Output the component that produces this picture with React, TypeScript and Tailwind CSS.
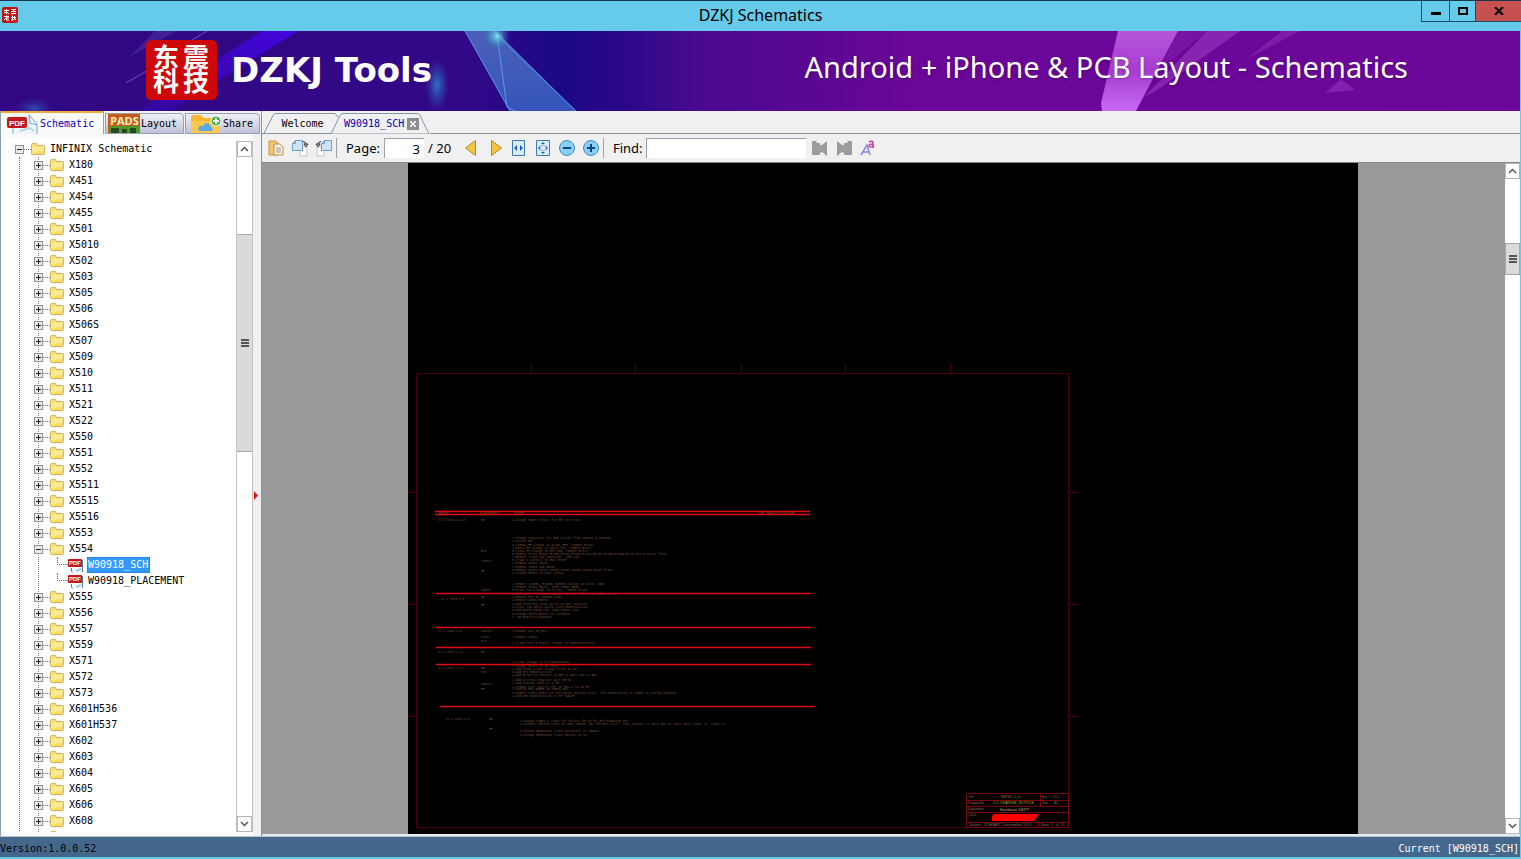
import type { ReactNode } from "react";

const foldersBefore = [
  "X180", "X451", "X454", "X455", "X501", "X5010", "X502", "X503", "X505", "X506", "X506S", "X507",
  "X509", "X510", "X511", "X521", "X522", "X550", "X551", "X552", "X5511", "X5515", "X5516", "X553",
];

const foldersAfter = [
  "X555", "X556", "X557", "X559", "X571", "X572", "X573", "X601H536", "X601H537", "X602", "X603",
  "X604", "X605", "X606", "X608",
];

const files = [
  { name: "W90918_SCH", selected: true },
  { name: "W90918_PLACEMENT", selected: false },
];

// notes on the sheet: [x, baseline, text]
const notes: [number, number, string][] = [
  [438, 521, "V1.1 2015.12.28"],
  [481, 521, "BB"],
  [512, 521, "1.Change Power Select for RF Interface"],
  [512, 539, "1.Change capacitor for bom bilink from U38510 (C200030)"],
  [512, 542, "2.Delete R9"],
  [512, 546, "3.U7801V_RF change to U7101_RF0, remove R7101"],
  [512, 549, "4.U5714 RF change to U9121_PA1, remove R7141"],
  [481, 552, "BTN"],
  [512, 552, "5.J1701 RF change to RF2 PA0, remove R7171"],
  [512, 555, "6.Remove R7101,R7102,R7103,R7104,R7105,R7106,R7107,R7108,R7109,R7110,R7111,R7112 lines"],
  [512, 558, "7.Remove J7101 and connector, add cap"],
  [481, 562, "Camera"],
  [512, 561, "8.J7101 V connect to GND_SENSE"],
  [512, 564, "1.Remove U8101 J8101"],
  [512, 568, "2.Remove J8104 and R8101"],
  [481, 572, "RF"],
  [512, 571, "3.Remove C8101,C8102,C8103,C8104,C8105,C8106,C8107 R 0xx"],
  [512, 574, "4.Change R8101 to 0402 sensor"],
  [512, 585, "1.Remove J10001, R10002,R10003 change as pilot lamp"],
  [512, 588, "2.Remove C8101,R8201, keep C8301,0R0B"],
  [481, 591, "Audio"],
  [512, 591, "3.R7101_PA1 change to PA_PA2, remove R7101"],
  [512, 595, "4.Add C7801 for R6101,R61010 for EMI filter of audio by 33PF"],
  [441, 600, "V1.1 2016.1.8"],
  [481, 598, "BB"],
  [512, 598, "1.Remove GPS as common U2404"],
  [512, 601, "2.Remove C8701,R8701"],
  [481, 606, "RF"],
  [512, 605, "3.Add reserved C1101 parts on EMI register"],
  [512, 608, "4.Color cap GF211 build clock modification"],
  [512, 611, "5.Add R8701,R8702 for TRUM,TRUM1 star"],
  [512, 615, "6.Change C8701,R8701 to rare0010"],
  [512, 618, "7. BB modification0101"],
  [438, 632, "V1.1 2016.1.9"],
  [481, 632, "Connect"],
  [512, 632, "1.Remove U01_C0_0011"],
  [481, 638, "Other"],
  [512, 638, "1.Remove J8101"],
  [481, 642, "BTN"],
  [512, 644, "1.C7101/7102 R signal change to GND01010101010"],
  [438, 653, "V1.1 2016.1.11"],
  [481, 653, "BB"],
  [512, 663, "1.C7101 change to 0.1PG0402C0101"],
  [438, 669, "V1.1 2016.1.12"],
  [481, 669, "BB"],
  [512, 667, "1.Change R7101 to be VIO28"],
  [512, 670, "2.Add R7101,C7101 change C7102 0.1uF"],
  [481, 673, "BTN"],
  [512, 673, "3.Add NFC modification"],
  [512, 676, "4.Add R7101 to connect SW_RF1 & AGC1,AGC to BB0"],
  [512, 681, "1.Add ATJ/MIC register part,0R R1"],
  [481, 685, "Camera"],
  [512, 684, "2.Add Vsensor both of C_CE"],
  [512, 688, "1.Change null search reg. of R01-1 to be RF"],
  [481, 690, "RF"],
  [512, 690, "2.Modify R01 00RNF to 01RNM_001"],
  [512, 694, "3.Remove C7011,R7011 to netlabing passive start, The counterplug is named as analog padding"],
  [512, 697, "4.Add 000 modification to BF TABLET"],
  [446, 720, "V1.1 2016.2.4"],
  [489, 720, "BB"],
  [520, 722, "1.Change PCB01-1 reset for before the pilot performanced 101"],
  [520, 725, "2.Connect TRC1M0 reset to TRD1 SENSE1,SE1 The RST alert. That connect to more 5MA an input more check is, input IL"],
  [489, 730, "RF"],
  [520, 732, "3.Change RDD010101 track connector to TRUM01"],
  [520, 736, "4.Change RDD010102 track EX1101 to 01"],
];

const rules = [
  [435, 511, 810],
  [435, 514, 810],
  [436, 593, 811],
  [436, 627, 811],
  [436, 647, 811],
  [436, 664, 811],
  [440, 706, 815],
];

const FolderIcon = () => (
  <svg width="14" height="14" viewBox="0 0 14 14" className="shrink-0" aria-hidden="true">
    <path d="M.5 2.500q0-1 1-1h4l1 2h6q1 0 1 1v7q0 1-1 1h-11q-1 0-1-1z" fill="#f8dc72" stroke="#d8b258" />
    <path d="M1 4.500h12v4.500q-6 0-12 2z" fill="#fff0a0" opacity=".75" />
  </svg>
);

const PdfIcon = () => (
  <svg width="32" height="20" viewBox="0 0 32 20" className="shrink-0" aria-hidden="true">
    <path d="M6 0h17l7 9v11H6z" fill="#eef6fb" />
    <path d="M22 1l8 9v10M22 1l1 8 7 2M6 14v6" fill="none" stroke="#71a9cc" />
    <path d="M13 17l10-3 4 3" fill="none" stroke="#b4d6e8" strokeWidth="2" />
    <rect x="0" y="3" width="20" height="11" rx="2" fill="#c4161c" />
    <text x="2" y="12" fontSize="8" fontWeight="700" fill="#fff" fontFamily="Liberation Sans, sans-serif">PDF</text>
  </svg>
);

const PdfFileIcon = () => (
  <svg width="17" height="16" viewBox="0 0 17 16" className="shrink-0" aria-hidden="true">
    <path d="M4 1h8l3 3v11H4z" fill="#f4f9fc" />
    <path d="M14.500 3v12M3.500 11v3l1 1.500" fill="none" stroke="#4f7f9a" />
    <path d="M8 14l5-2" stroke="#a5cfe6" strokeWidth="2" />
    <rect x="0" y="2" width="14" height="8" rx="1" fill="#c4161c" />
    <text x="1" y="8" fontSize="6" fontWeight="700" fill="#fff" fontFamily="Liberation Sans, sans-serif">PDF</text>
  </svg>
);

const PadsIcon = () => (
  <svg width="32" height="19" viewBox="0 0 32 19" className="shrink-0" aria-hidden="true">
    <rect width="32" height="19" fill="#c85a1c" />
    <rect x="1" y="12" width="30" height="7" fill="#4c9a2c" />
    <path d="M3 14h8v5H3zM14 15h5v4h-5zM22 14h6v5h-6z" fill="#244a20" />
    <text x="2" y="11" fontSize="11" fontWeight="700" fill="#fff4c0" fontFamily="Open Sans, sans-serif">PADS</text>
  </svg>
);

const ShareIcon = () => (
  <svg width="32" height="19" viewBox="0 0 32 19" className="shrink-0" aria-hidden="true">
    <path d="M1 3q0-2 2-2h8l3 3h13q3 0 3 3v12H1z" fill="#fdb62f" />
    <path d="M1 7h29v12H1z" fill="#ffc84c" />
    <path d="M10 17q-3-1-1-4 1-2 4-1 2-5 6-2 2 1 2 3 3 1 1 4z" fill="#58a9ea" />
    <circle cx="26" cy="7" r="5" fill="#45b04a" stroke="#fff" />
    <path d="M26 4v6M23 7h6" stroke="#fff" strokeWidth="2" />
  </svg>
);

const Seal = () => (
  <svg width="71" height="60" viewBox="0 0 71 60" className="shrink-0 overflow-visible" role="img" aria-label="DZKJ">
    <rect width="71" height="60" rx="5" fill="#ce0808" />
    <g fill="#fff" fontSize="26" fontWeight="700" fontFamily="Noto Sans CJK SC, sans-serif" textAnchor="middle">
      <text x="20" y="27">东</text>
      <text x="50" y="27">震</text>
      <text x="20" y="51">科</text>
      <text x="50" y="51">技</text>
    </g>
  </svg>
);

const SmallSeal = () => (
  <svg width="16" height="16" viewBox="0 0 16 16" aria-hidden="true">
    <rect width="16" height="16" rx="2" fill="#c41212" />
    <path d="M2 3.500h5M4.500 2v5M2 6l2-1 3 2M9 2.500h5M9 4.500h5M11.500 2v3M9 6.500h5M2 9.500h5M4.500 8.500v5M2 13l2-2M6 9v5M9 10.500h5M10.500 8.500v5M12.500 9v3M9 13.500l4-2 1 2" stroke="#fff" fill="none" />
  </svg>
);

const BannerArt = () => (
  <svg className="absolute inset-0 h-full w-full" viewBox="0 0 1520 80" preserveAspectRatio="none" aria-hidden="true">
    <defs>
      <linearGradient id="beam" x1="1" y1="0" x2="0" y2="1">
        <stop offset="0" stopColor="#4305e0" />
        <stop offset="1" stopColor="#3a06b8" stopOpacity=".5" />
      </linearGradient>
      <linearGradient id="shard" x1="0" y1="0" x2="0" y2="1">
        <stop offset="0" stopColor="#5a8fd0" stopOpacity=".8" />
        <stop offset="1" stopColor="#3a68c8" />
      </linearGradient>
      <linearGradient id="pink" x1="0" y1="0" x2="0" y2="1">
        <stop offset="0" stopColor="#b555d8" />
        <stop offset=".5" stopColor="#a83cd0" />
        <stop offset="1" stopColor="#c76af5" />
      </linearGradient>
      <radialGradient id="glow">
        <stop offset="0" stopColor="#2a8fd0" stopOpacity=".8" />
        <stop offset="1" stopColor="#2a5fc0" stopOpacity="0" />
      </radialGradient>
      <radialGradient id="spark">
        <stop offset="0" stopColor="#7ff0f0" stopOpacity=".9" />
        <stop offset="1" stopColor="#2a8fc0" stopOpacity="0" />
      </radialGradient>
    </defs>
    <path d="M262 0h36L170 80h-32z" fill="url(#beam)" />
    <path d="M155 0h22l-48 26z" fill="#473099" opacity=".6" />
    <path d="M207 0l-23 14M150 38l-24 14" stroke="#6a50c8" />
    <ellipse cx="437" cy="54" rx="12" ry="26" fill="url(#glow)" />
    <ellipse cx="34" cy="78" rx="20" ry="12" fill="url(#glow)" opacity=".6" />
    <path d="M465 0h31l80 80h-66z" fill="url(#shard)" opacity=".8" />
    <path d="M465 0l45 80M497 4l79 76M497 4l10 72 8 4" stroke="#5b97f0" fill="none" />
    <ellipse cx="497" cy="5" rx="13" ry="13" fill="url(#spark)" />
    <path d="M1118 0h60l-42 80h-34l-1-8z" fill="url(#pink)" />
    <path d="M1207 0h33l-84 60-12 6z" fill="#9a38c0" opacity=".6" />
    <path d="M1178 0h29l-48 40z" fill="#801cac" opacity=".6" />
    <path d="M1282 0h18l-55 29z" fill="#8c28b8" opacity=".6" />
    <path d="M1341 48l14 11-30 3z" fill="#8b25b4" opacity=".8" />
  </svg>
);

const Expander = ({ open = false }: { open?: boolean }) => (
  <svg width="9" height="9" viewBox="0 0 9 9" className="relative shrink-0" aria-hidden="true">
    <rect x=".5" y=".5" width="8" height="8" fill="#e9e9ec" stroke="#919191" />
    <path d={open ? "M2 4.500h5" : "M2 4.500h5M4.500 2v5"} stroke="#222" />
  </svg>
);

const FolderRow = ({ name, open }: { name?: string; open?: boolean }) => (
  <li className="flex h-4 items-center">
    <Expander open={open} />
    <span className="w-[7px] shrink-0 border-t border-dotted border-gray-500" />
    <FolderIcon />
    {name && <span className="pl-[5px]">{name}</span>}
  </li>
);

const ScrollButton = ({ down = false }: { down?: boolean }) => (
  <button
    type="button"
    aria-label={down ? "Scroll down" : "Scroll up"}
    className="flex h-4 w-full shrink-0 items-center justify-center border border-[#b5b5b5] bg-white"
  >
    <svg width="9" height="6" viewBox="0 0 9 6" aria-hidden="true">
      <path d={down ? "M1 1l3.500 3.500L8 1" : "M1 5l3.500-3.500L8 5"} stroke="#555" strokeWidth="1.500" fill="none" />
    </svg>
  </button>
);

const Grip = () => (
  <svg width="8" height="8" viewBox="0 0 8 8" aria-hidden="true">
    <path d="M0 1h8M0 4h8M0 7h8" stroke="#555" strokeWidth="2" />
  </svg>
);

const ToolButton = ({ label, children }: { label: string; children: ReactNode }) => (
  <button type="button" aria-label={label} className="flex size-6 shrink-0 items-center justify-center">
    <svg width="18" height="18" viewBox="0 0 18 18" aria-hidden="true">
      {children}
    </svg>
  </button>
);

const Toolbar = () => (
  <div className="flex h-7 shrink-0 items-center bg-[#f0f0f0] pl-[2px] font-['Noto_Sans','Open_Sans',sans-serif] text-[13px] text-black">
    <ToolButton label="Copy">
      <path d="M2 2h7l2 2v12H2z" fill="#f3c56c" stroke="#c9953f" />
      <path d="M7 5h6l3 3v8H7z" fill="#fdf3d8" stroke="#b69555" />
      <path d="M9 9h5M9 11h5M9 13h5" stroke="#999" />
    </ToolButton>
    <ToolButton label="Rotate right">
      <path d="M9 8h7v9H9z" fill="#fff" stroke="#c5c5c5" />
      <path d="M4.500 1.500h7v10h-10v-7z" fill="#cfe4f8" stroke="#6e9cc8" />
      <path d="M1.500 4.500h3v-3" fill="none" stroke="#6e9cc8" />
      <path d="M12 2.500q3 0 3 3M13 5h4l-2 3z" stroke="#333" fill="none" />
    </ToolButton>
    <ToolButton label="Rotate left">
      <path d="M2 8h7v9H2z" fill="#fff" stroke="#c5c5c5" />
      <path d="M9.500 1.500h7v10h-10v-7z" fill="#cfe4f8" stroke="#6e9cc8" />
      <path d="M6.500 4.500h3v-3" fill="none" stroke="#6e9cc8" />
      <path d="M6 2.500q-3 0-3 3M1 5h4L3 8z" stroke="#333" fill="none" />
    </ToolButton>
    <span className="h-5 w-px bg-gray-400" />
    <label htmlFor="page" className="pl-[9px]">Page:</label>
    <input
      id="page"
      defaultValue="3"
      className="ml-1 h-5 w-10 shrink-0 border-t border-l border-gray-400 bg-white pr-[4px] text-right outline-none"
    />
    <span className="w-[34px] shrink-0 pl-1 whitespace-nowrap">/ 20</span>
    <ToolButton label="Previous page">
      <path d="M14.500 1.500v15L4.500 9z" fill="#f2c444" stroke="#b98a1c" />
    </ToolButton>
    <ToolButton label="Next page">
      <path d="M6.500 1.500v15L16.500 9z" fill="#f2c444" stroke="#b98a1c" />
    </ToolButton>
    <ToolButton label="Fit width">
      <path d="M3.500 1.500h12v15h-12z" fill="#d9ebfb" stroke="#3e78b5" />
      <path d="M8 6v6L5 9zM11 6v6l3-3z" fill="#1c5fa8" />
    </ToolButton>
    <ToolButton label="Fit page">
      <path d="M3.500 1.500h13v15h-13z" fill="#d9ebfb" stroke="#3e78b5" />
      <path d="M10 3l2 2H8zM10 15l2-2H8zM5 9l2-2v4zM15 9l-2-2v4z" fill="#1c5fa8" />
      <circle cx="10" cy="9" r="3" fill="none" stroke="#8ab4dc" />
    </ToolButton>
    <ToolButton label="Zoom out">
      <circle cx="10" cy="9" r="7.500" fill="#8ccdf5" stroke="#3d8cc4" />
      <path d="M6 9h8" stroke="#0b4684" strokeWidth="2" />
    </ToolButton>
    <ToolButton label="Zoom in">
      <circle cx="10" cy="9" r="7.500" fill="#8ccdf5" stroke="#3d8cc4" />
      <path d="M6 9h8M10 5v8" stroke="#0b4684" strokeWidth="2" />
    </ToolButton>
    <span className="ml-px h-5 w-px bg-gray-400" />
    <label htmlFor="find" className="pl-[9px]">Find:</label>
    <input
      id="find"
      className="mr-[2px] ml-[3px] h-5 w-40 border-t border-l border-gray-400 bg-white px-1 outline-none"
    />
    <ToolButton label="Find previous">
      <path d="M1 2h4l1 2h3v2h2l5-4v15l-5-4-2 1v2H1z" fill="#9c9c9c" />
    </ToolButton>
    <ToolButton label="Find next">
      <path d="M17 2h-4l-1 2H9v2H7L2 2v15l5-4 2 1v2h8z" fill="#9c9c9c" />
    </ToolButton>
    <ToolButton label="Match case">
      <path d="M2 16L8 6l3 10M4 13h6" stroke="#8c86ea" fill="none" strokeWidth="1.500" />
      <path d="M10 3q4-2 4 1v5M14 5q-4 0-4 2 1 2 4 0l1 1" stroke="#c43a9c" fill="none" strokeWidth="1.500" />
    </ToolButton>
  </div>
);

const Sheet = () => (
  <svg width="950" height="673" viewBox="408 163 950 673" className="block shrink-0" role="img" aria-label="Schematic page 3">
    <g stroke="#4a000a" fill="none">
      <path d="M416.500 373.500h652v454h-652z" />
      <path d="M531.500 363v10M635.500 363v10M741.500 363v10M845.500 363v10M950.500 363v10M408 492.500h8M408 604.500h8M408 716.500h8M1069 492.500h8M1069 604.500h8M1069 716.500h8" />
    </g>
    <g fontFamily="Liberation Mono, monospace" fontSize="3" fill="#74503a">
      {notes.map(([x, y, text]) => (
        <text key={`${x}-${y}`} x={x} y={y}>{text}</text>
      ))}
    </g>
    {rules.map(([x1, y, x2]) => (
      <path key={y} d={`M${x1} ${y}.5H${x2}`} stroke="#e00a10" strokeWidth="1.400" />
    ))}
    <g fontFamily="Liberation Mono, monospace" fontSize="4" fill="#9a4a28">
      <text x="439" y="514">Date</text>
      <text x="480" y="514">Category</text>
      <text x="514" y="514">Item</text>
      <text x="759" y="514">CB Modification</text>
    </g>
    <g stroke="#7a0808" fill="none">
      <path d="M966.500 793.500h102v34h-102zM966 800.500h102M966 806.500h102M966 812.500h102M966 822.500h102M1040.500 793v13M1038.500 822v5" />
    </g>
    <path d="M994 814h45l-5 7h-42v-5z" fill="#ff0000" />
    <g fontFamily="Liberation Sans, sans-serif" fontSize="4">
      <text x="1001" y="798" fill="#a07840">W918_1_0</text>
      <text x="993" y="804" fill="#b0a020">C1-CHANGE_NOTICE</text>
      <text x="1000" y="811" fill="#b0a080">Hardware DEPT</text>
      <g fontSize="3" fill="#9a6a50">
        <text x="968" y="798">Title</text>
        <text x="968" y="804">Drawing No</text>
        <text x="968" y="810">Department</text>
        <text x="968" y="816">Check</text>
        <text x="1042" y="798">Rev</text>
        <text x="1053" y="798">V1.0</text>
        <text x="1042" y="804">Size</text>
        <text x="1054" y="804">A3</text>
        <text x="969" y="826">Designer</text>
        <text x="984" y="826">SCHEMATIC</text>
        <text x="1003" y="826">Date modified</text>
        <text x="1023" y="826">2016.1</text>
        <text x="1041" y="826">Sheet</text>
        <text x="1051" y="826">3</text>
        <text x="1056" y="826">of</text>
        <text x="1061" y="826">20</text>
      </g>
    </g>
  </svg>
);

const Sidebar = () => (
  <aside className="flex w-[261px] shrink-0 flex-col border-l border-[#8ba0ae] bg-[#fafafa]">
    <div role="tablist" className="flex h-[23px] shrink-0 items-end bg-[#f0f0f0] text-black">
      <button type="button" role="tab" aria-selected="true" className="flex h-[23px] w-[103px] items-center gap-px overflow-hidden border-t-2 border-r border-t-[#f5a83c] border-r-gray-400 bg-[#fafafa] pl-[6px] text-[#0000c0]">
        <PdfIcon />
        Schematic
      </button>
      <button type="button" role="tab" aria-selected="false" className="ml-px flex h-[21px] w-[79px] items-center gap-px rounded-tr-sm border border-[#96a0b0] bg-linear-to-b from-[#f0f0f6] to-[#bfc1d8] pl-[2px]">
        <PadsIcon />
        Layout
      </button>
      <button type="button" role="tab" aria-selected="false" className="ml-px flex h-[21px] w-[75px] items-center gap-px rounded-tr-sm border border-[#96a0b0] bg-linear-to-b from-[#f0f0f6] to-[#bfc1d8] pl-1">
        <ShareIcon />
        Share
      </button>
    </div>
    <div className="flex min-h-0 flex-1">
      <div className="my-1 flex min-w-0 flex-1 bg-white pt-[3px]">
        <div className="min-w-0 flex-1 overflow-hidden pl-[14px]">
          <div className="flex h-4 items-center">
            <Expander open />
            <span className="w-[7px] shrink-0 border-t border-dotted border-gray-500" />
            <FolderIcon />
            <span className="pl-[5px]">INFINIX Schematic</span>
          </div>
          <div className="ml-1 border-l border-dotted border-gray-500 pl-[14px]">
            <ul className="bg-[linear-gradient(to_bottom,#808080_50%,transparent_50%)] bg-[length:1px_2px] bg-[position:4px_0] bg-repeat-y">
              {foldersBefore.map((name) => (
                <FolderRow key={name} name={name} />
              ))}
              <FolderRow name="X554" open />
              <li>
                <ul className="pl-[23px]">
                  {files.map((file) => (
                    <li key={file.name} className="flex h-4 items-center">
                      <span className="h-2 w-[11px] shrink-0 self-start border-b border-l border-dotted border-gray-500" />
                      <PdfFileIcon />
                      <span
                        className={
                          file.selected
                            ? "ml-[2px] border border-dotted border-[#a05a10] bg-[#3399ff] pr-px leading-[14px] text-white"
                            : "ml-[3px]"
                        }
                      >
                        {file.name}
                      </span>
                    </li>
                  ))}
                </ul>
              </li>
              {foldersAfter.map((name) => (
                <FolderRow key={name} name={name} />
              ))}
              <FolderRow />
            </ul>
          </div>
        </div>
        <div className="flex w-[17px] shrink-0 flex-col border-x border-[#c4c4c4] bg-white">
          <ScrollButton />
          <div className="flex-[77]" />
          <div className="flex flex-[216] items-center justify-center border-y border-[#a8a8a8] bg-[#dadada]">
            <Grip />
          </div>
          <div className="flex-[364]" />
          <ScrollButton down />
        </div>
      </div>
      <div className="flex w-2 shrink-0 items-center bg-[#f0f0f0] pt-5">
        <svg width="6" height="9" viewBox="0 0 6 9" aria-hidden="true">
          <path d="M1 0l4 4.500L1 9z" fill="#e01010" />
        </svg>
      </div>
    </div>
  </aside>
);

const DocumentTabs = () => (
  <div role="tablist" className="relative flex h-[23px] shrink-0 items-end bg-[#f0f0f0] text-black">
    <svg width="168" height="21" viewBox="0 0 168 21" className="absolute bottom-0 left-0" aria-hidden="true">
      <path d="M0 20.500h2L11 2.500q1-2 3-2h59l3 4" fill="none" stroke="#8495a3" />
      <path d="M69 21L78 2.500q1-2 3-2h74q2 0 3 2l9 18.500z" fill="#f0f0f0" stroke="#8495a3" />
      <path d="M0 20.500h69" stroke="#8495a3" />
    </svg>
    <button type="button" role="tab" aria-selected="false" className="relative h-[21px] w-[75px] pl-[6px]">Welcome</button>
    <div className="relative flex h-[21px] w-[93px] items-center gap-[3px] pl-[7px] text-[#0000c0]">
      <button type="button" role="tab" aria-selected="true">W90918_SCH</button>
      <button type="button" aria-label="Close tab" className="flex size-3 items-center justify-center bg-[#8d8d8d]">
        <svg width="6" height="6" viewBox="0 0 6 6" aria-hidden="true">
          <path d="M0 0l6 6M6 0L0 6" stroke="#fff" strokeWidth="1.500" />
        </svg>
      </button>
    </div>
    <div className="h-px flex-1 bg-[#8495a3]" />
  </div>
);

export default function App() {
  return (
    <div className="flex h-screen flex-col overflow-hidden border-t border-[#17384a] bg-[#66cbea] font-['DejaVu_Sans_Mono','Liberation_Mono',monospace] text-[10px] leading-4 text-black">
      <header className="flex h-[30px] shrink-0 items-start">
        <div className="flex w-[100px] items-center pt-[6px] pl-[2px]">
          <SmallSeal />
        </div>
        <h1 className="flex-1 pt-1 text-center font-['Noto_Sans','Open_Sans',sans-serif] text-[16px] leading-5">
          DZKJ Schematics
        </h1>
        <div className="flex h-[21px] w-[100px] border-b border-l border-[#1d4c60]">
          <button type="button" aria-label="Minimize" className="flex w-7 items-center justify-center border-r border-[#1d4c60] pt-1">
            <span className="h-[3px] w-[10px] bg-black" />
          </button>
          <button type="button" aria-label="Maximize" className="flex w-[26px] items-center justify-center border-r border-[#1d4c60]">
            <span className="h-2 w-[10px] border-2 border-black" />
          </button>
          <button type="button" aria-label="Close" className="flex flex-1 items-center justify-center bg-[#c75050]">
            <svg width="10" height="8" viewBox="0 0 10 8" aria-hidden="true">
              <path d="M1 0l8 8M9 0L1 8" stroke="#000" strokeWidth="2" />
            </svg>
          </button>
        </div>
      </header>

      <div className="mr-px flex min-h-0 flex-1 flex-col">
        {/* Banner */}
        <div className="relative flex h-20 shrink-0 items-center bg-[linear-gradient(to_right,#310783_0%,#330888_30%,#1c0885_37%,#2a0888_41%,#4a0a90_46%,#6a0698_60%,#6c0799_100%)] pr-28 pl-[146px] text-white">
          <BannerArt />
          <div className="relative flex items-center gap-[14px] pb-[2px]">
            <Seal />
            <span className="font-['DejaVu_Sans','Noto_Sans',sans-serif] text-[34px] leading-10 font-bold whitespace-nowrap">DZKJ Tools</span>
          </div>
          <p className="relative ml-auto pb-2 font-['Noto_Sans','Open_Sans',sans-serif] text-[29px] leading-10 whitespace-nowrap text-shadow-md">
            Android + iPhone &amp; PCB Layout - Schematics
          </p>
        </div>

        {/* Tree and viewer */}
        <div className="flex min-h-0 flex-1">
          <Sidebar />
          <main className="flex min-w-0 flex-1 flex-col border-l border-[#8495a3] bg-[#f0f0f0]">
            <DocumentTabs />
            <Toolbar />
            <div className="flex min-h-0 flex-1 border-t border-b-2 border-t-[#888] border-b-[#e8ecee]">
              <div className="flex min-w-0 flex-1 justify-center overflow-hidden bg-[#999] pr-px">
                <div className="shrink-0 bg-black">
                  <Sheet />
                </div>
              </div>
              <div className="flex w-[15px] shrink-0 flex-col bg-white">
                <ScrollButton />
                <div className="flex-[64]" />
                <div className="flex flex-[31] items-center justify-center border border-[#a8a8a8] bg-[#dadada]">
                  <Grip />
                </div>
                <div className="flex-[546]" />
                <ScrollButton down />
              </div>
            </div>
          </main>
        </div>

        <footer className="mb-[2px] flex h-[21px] shrink-0 items-end justify-between border-t border-[#b8c4cc] bg-[#45678c] pr-px leading-4">
          <span>Version:1.0.0.52</span>
          <span className="text-white">Current [W90918_SCH]</span>
        </footer>
      </div>
    </div>
  );
}
